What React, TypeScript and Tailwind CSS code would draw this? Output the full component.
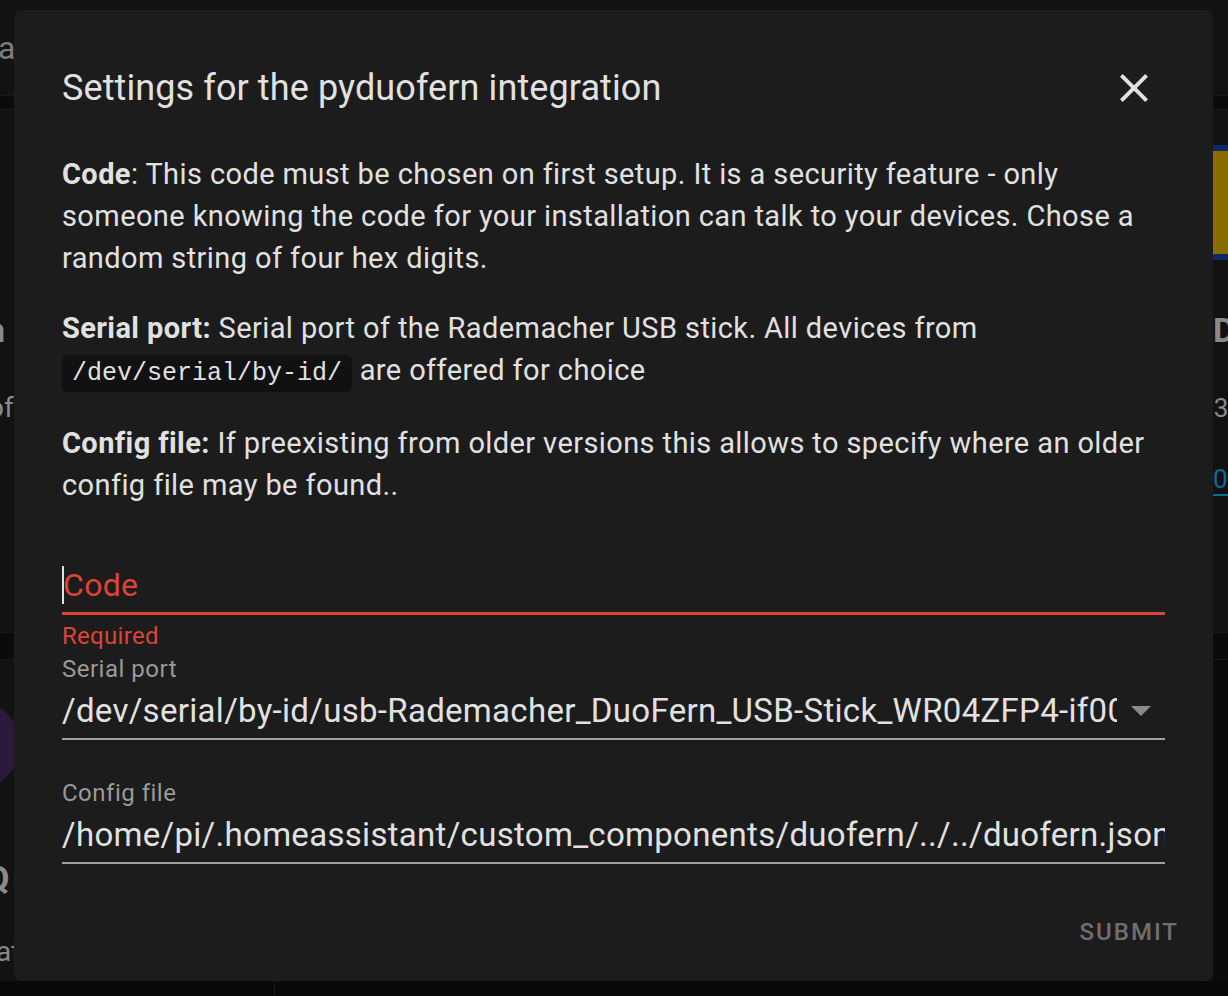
const FONT = { fontFamily: 'Roboto, "Noto Sans", sans-serif' }

function Background() {
  return (
    <div className="flex h-[996px] flex-col bg-[#121212]">
      <div className="flex h-[95px] items-center px-0 text-[32px] text-[#7d7d7d]">
        <span className="-ml-[2px]">a</span>
      </div>
      <div className="h-[15px] border-y border-[#1a1a1a] bg-[#0b0b0b]" />
      <div className="flex h-[522px] justify-between">
        <div className="flex w-[14px] flex-col overflow-hidden pt-[200px] text-[#8a8a8a]">
          <span className="-ml-[14px] text-[34px] font-bold leading-[40px]">n</span>
          <span className="-ml-[12px] mt-[40px] text-[28px] leading-[36px]">of</span>
        </div>
        <div className="flex w-[15px] flex-col overflow-hidden pt-[35px]">
          <div className="h-[115px] w-[40px] border-y-[6px] border-[#0c2a66] bg-[#8a6d00]" />
          <span className="mt-[50px] text-[34px] font-bold leading-[40px] text-[#8a8a8a]">D</span>
          <span className="-ml-[6px] mt-[40px] text-[26px] leading-[36px] text-[#8a8a8a]">.3</span>
          <span className="mt-[38px] border-b-2 border-[#0e6a9a] text-[26px] leading-[30px] text-[#0e6a9a]">0</span>
        </div>
      </div>
      <div className="h-[28px] border-y border-[#1a1a1a] bg-[#0b0b0b]" />
      <div className="flex h-[321px] justify-between">
        <div className="flex w-[14px] flex-col overflow-hidden pt-[40px] text-[#8a8a8a]">
          <div className="-ml-[70px] h-[90px] w-[90px] rounded-full bg-[#2c1a3a]" />
          <span className="-ml-[14px] mt-[68px] text-[34px] font-bold leading-[40px]">Q</span>
          <span className="-ml-[4px] mt-[36px] text-[28px] leading-[36px]">at</span>
        </div>
        <div className="w-[15px] bg-[#0b0b0b]" />
      </div>
      <div className="flex flex-1 bg-[#080808]">
        <div className="w-[275px] border-r border-[#1a1a1a]" />
      </div>
    </div>
  )
}

function Field({
  label,
  value,
  dropdown,
  className,
}: {
  label: string
  value: string
  dropdown?: boolean
  className?: string
}) {
  return (
    <div className={className}>
      <div className="text-[24px] leading-[32px] tracking-[0.5px] text-[#9a9a9a]">{label}</div>
      <div className="mt-[5px] flex items-center border-b-2 border-[#a0a0a0] pb-[6px]">
        <div className="min-w-0 flex-1 overflow-hidden whitespace-nowrap text-[33px] leading-[42px] tracking-[0.3px] text-[#e1e1e1]">
          {value}
        </div>
        {dropdown && (
          <svg width="20" height="10" viewBox="0 0 20 10" className="ml-[14px] mr-[14px] shrink-0">
            <path d="M0 0 L20 0 L10 10 Z" fill="#8a8a8a" />
          </svg>
        )}
      </div>
    </div>
  )
}

export default function App() {
  return (
    <div className="relative h-[996px] w-[1228px] overflow-hidden" style={FONT}>
      <Background />
      <div className="absolute left-[14px] top-[10px] flex h-[971px] w-[1199px] flex-col rounded-[8px] bg-[#1c1c1c] text-[#e1e1e1]">
        <div className="flex items-center justify-between pl-[48px] pr-[55px] pt-[54px]">
          <h2 className="text-[36px] leading-[48px] tracking-[0.1px] text-[#e1e1e1]">
            Settings for the pyduofern integration
          </h2>
          <button type="button" className="flex h-[48px] w-[48px] items-center justify-center">
            <svg viewBox="0 0 24 24" width="48" height="48">
              <path
                fill="#e1e1e1"
                d="M19,6.41L17.59,5L12,10.59L6.41,5L5,6.41L10.59,12L5,17.59L6.41,19L12,13.41L17.59,19L19,17.59L13.41,12L19,6.41Z"
              />
            </svg>
          </button>
        </div>

        <div className="px-[48px] pt-[41px] text-[29px] leading-[42px] tracking-[0.4px]">
          <p>
            <b className="font-bold">Code</b>: This code must be chosen on first setup. It is a security feature - only
            someone knowing the code for your installation can talk to your devices. Chose a random string of four
            hex digits.
          </p>
          <p className="mt-[28px]">
            <b className="font-bold">Serial port:</b> Serial port of the Rademacher USB stick. All devices from{' '}
            <code
              className="rounded-[6px] bg-[#111111] px-[10px] py-[4px] text-[25px] tracking-normal"
              style={{ fontFamily: '"Liberation Mono", monospace' }}
            >
              /dev/serial/by-id/
            </code>{' '}
            are offered for choice
          </p>
          <p className="mt-[27px]">
            <b className="font-bold">Config file:</b> If preexisting from older versions this allows to specify where
            an older config file may be found..
          </p>
        </div>

        <div className="px-[48px] pt-[58px]">
          <div className="flex items-center border-b-[3px] border-[#db4437] pb-[6px]">
            <span className="mr-[-1px] h-[38px] w-[2px] bg-[#e1e1e1]" />
            <span className="text-[32px] leading-[42px] tracking-[0.3px] text-[#db4437]">Code</span>
          </div>
          <div className="pt-[5px] text-[24px] leading-[32px] tracking-[0.3px] text-[#db4437]">Required</div>
          <Field
            label="Serial port"
            value="/dev/serial/by-id/usb-Rademacher_DuoFern_USB-Stick_WR04ZFP4-if00-port0"
            dropdown
            className="mt-[1px]"
          />
          <Field
            label="Config file"
            value="/home/pi/.homeassistant/custom_components/duofern/../../duofern.json"
            className="mt-[37px]"
          />
        </div>

        <div className="flex justify-end pr-[34px] pt-[52px]">
          <button type="button" className="text-[24px] font-medium uppercase leading-[32px] tracking-[2px] text-[#6f6f6f]">
            Submit
          </button>
        </div>
      </div>
    </div>
  )
}
